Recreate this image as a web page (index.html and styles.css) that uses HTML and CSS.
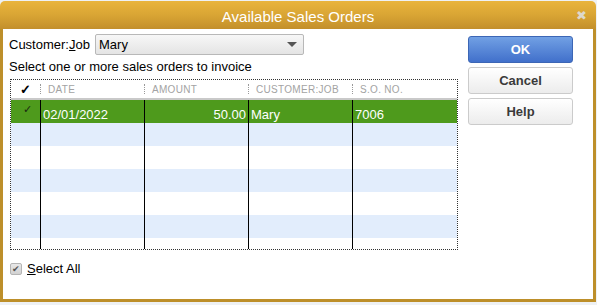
FILE: index.html
```html
<!DOCTYPE html>
<html lang="en">
<head>
  <meta charset="UTF-8">
  <title>Available Sales Orders</title>
  <link rel="stylesheet" href="styles.css">
</head>
<body>
  <div class="window">
    <div class="titlebar">
      <span class="title">Available Sales Orders</span>
      <span class="close">&#x2716;</span>
    </div>

    <div class="content">
      <div class="main">
        <div class="customer-row">
          <span class="field-label">Customer:<u>J</u>ob</span>
          <div class="dropdown">
            <span>Mary</span>
            <span class="arrow"></span>
          </div>
        </div>

        <p class="hint">Select one or more sales orders to invoice</p>

        <div class="grid">
          <div class="head">
            <div class="cell check">&#x2713;</div>
            <div class="cell sep">DATE</div>
            <div class="cell sep">AMOUNT</div>
            <div class="cell sep">CUSTOMER:JOB</div>
            <div class="cell sep">S.O. NO.</div>
          </div>
          <div class="row selected">
            <div class="cell check">&#x2713;</div>
            <div class="cell">02/01/2022</div>
            <div class="cell num">50.00</div>
            <div class="cell">Mary</div>
            <div class="cell">7006</div>
          </div>
          <div class="row alt"><div class="cell check"></div><div class="cell"></div><div class="cell"></div><div class="cell"></div><div class="cell"></div></div>
          <div class="row"><div class="cell check"></div><div class="cell"></div><div class="cell"></div><div class="cell"></div><div class="cell"></div></div>
          <div class="row alt"><div class="cell check"></div><div class="cell"></div><div class="cell"></div><div class="cell"></div><div class="cell"></div></div>
          <div class="row"><div class="cell check"></div><div class="cell"></div><div class="cell"></div><div class="cell"></div><div class="cell"></div></div>
          <div class="row alt"><div class="cell check"></div><div class="cell"></div><div class="cell"></div><div class="cell"></div><div class="cell"></div></div>
          <div class="row"><div class="cell check"></div><div class="cell"></div><div class="cell"></div><div class="cell"></div><div class="cell"></div></div>
        </div>

        <div class="select-all">
          <span class="checkbox">&#x2714;</span>
          <span><u>S</u>elect All</span>
        </div>
      </div>

      <div class="buttons">
        <button class="btn primary">OK</button>
        <button class="btn">Cancel</button>
        <button class="btn">Help</button>
      </div>
    </div>
  </div>
</body>
</html>
```

FILE: styles.css
```css
body {
  margin: 0;
  width: 597px;
  height: 305px;
  overflow: hidden;
  background: #eef1f4;
  font-family: 'Liberation Sans', Arial, sans-serif;
  font-size: 13px;
  color: #000;
}

.window {
  width: 596px;
  margin-top: 1px;
}

.titlebar {
  height: 28px;
  display: flex;
  align-items: center;
  justify-content: center;
  position: relative;
  background: linear-gradient(180deg, #e9b43c 0%, #d9a534 50%, #c38f2b 100%);
  border-radius: 5px 5px 0 0;
  color: #fff;
}

.title {
  font-size: 15px;
  padding-top: 2px;
}

.close {
  position: absolute;
  right: 9px;
  top: 7px;
  font-size: 13px;
  color: #ddd8cc;
}

.content {
  display: flex;
  height: 270px;
  background: #fff;
  border: 3px solid #bd8f2a;
  border-top: none;
}

.main {
  width: 449px;
  padding: 5px 0 0 6px;
}

.customer-row {
  display: flex;
  align-items: center;
  height: 21px;
}

.field-label {
  width: 86px;
}

.dropdown {
  width: 204px;
  height: 19px;
  padding: 0 0 0 3px;
  display: flex;
  align-items: center;
  justify-content: space-between;
  border: 1px solid #b8b8b8;
  border-radius: 2px;
  background: linear-gradient(180deg, #f7f7f7 0%, #e4e4e4 100%);
}

.arrow {
  width: 0;
  height: 0;
  margin-right: 6px;
  border-left: 5px solid transparent;
  border-right: 5px solid transparent;
  border-top: 5px solid #555;
}

.hint {
  margin: 4px 0 0 0;
  line-height: 15px;
}

.grid {
  width: 446px;
  height: 169px;
  margin: 5px 0 0 1px;
  border: 1px dotted #333;
  overflow: hidden;
}

.head, .row {
  display: grid;
  grid-template-columns: 30px 104px 104px 104px 104px;
}

.head {
  height: 18px;
  border-bottom: 2px solid #c9c9c9;
  color: #a3a3a3;
  font-size: 10px;
  letter-spacing: 0.3px;
  align-items: center;
}

.head .cell {
  position: relative;
  padding-left: 7px;
}

.head .sep::before {
  content: "";
  position: absolute;
  left: -1px;
  top: 0;
  height: 10px;
  border-left: 1px dotted #999;
}

.head .check {
  padding-left: 9px;
  color: #000;
  font-size: 13px;
  font-weight: bold;
}

.row {
  height: 23px;
}

.row .cell {
  border-right: 1px solid #000;
  padding-left: 2px;
  line-height: 29px;
}

.row .cell:last-child {
  border-right: none;
}

.row.alt {
  background: #e2edfc;
}

.row.selected {
  background: #4e9a1c;
  color: #fff;
}

.row.selected .check {
  color: #1a2a10;
  font-size: 11px;
  line-height: 18px;
  padding-left: 12px;
}

.row .num {
  text-align: right;
  padding: 0 2px 0 0;
}

.select-all {
  display: flex;
  align-items: center;
  gap: 5px;
  margin: 11px 0 0 1px;
}

.checkbox {
  width: 10px;
  height: 10px;
  border: 1px solid #b5b5b5;
  border-radius: 2px;
  background: linear-gradient(180deg, #e8e8e8 0%, #d2d2d2 100%);
  color: #555;
  font-size: 9px;
  line-height: 10px;
  text-align: center;
}

.buttons {
  display: flex;
  flex-direction: column;
  gap: 4px;
  padding: 7px 0 0 10px;
}

.btn {
  width: 105px;
  height: 27px;
  border: 1px solid #cbcbcb;
  border-radius: 3px;
  background: linear-gradient(180deg, #ffffff 0%, #ececec 100%);
  font-family: 'Liberation Sans', Arial, sans-serif;
  font-size: 13px;
  font-weight: bold;
  color: #3a3a3a;
}

.btn.primary {
  border-color: #3c66b5;
  background: linear-gradient(180deg, #71a0e4 0%, #4170cb 100%);
  color: #fff;
}
```
